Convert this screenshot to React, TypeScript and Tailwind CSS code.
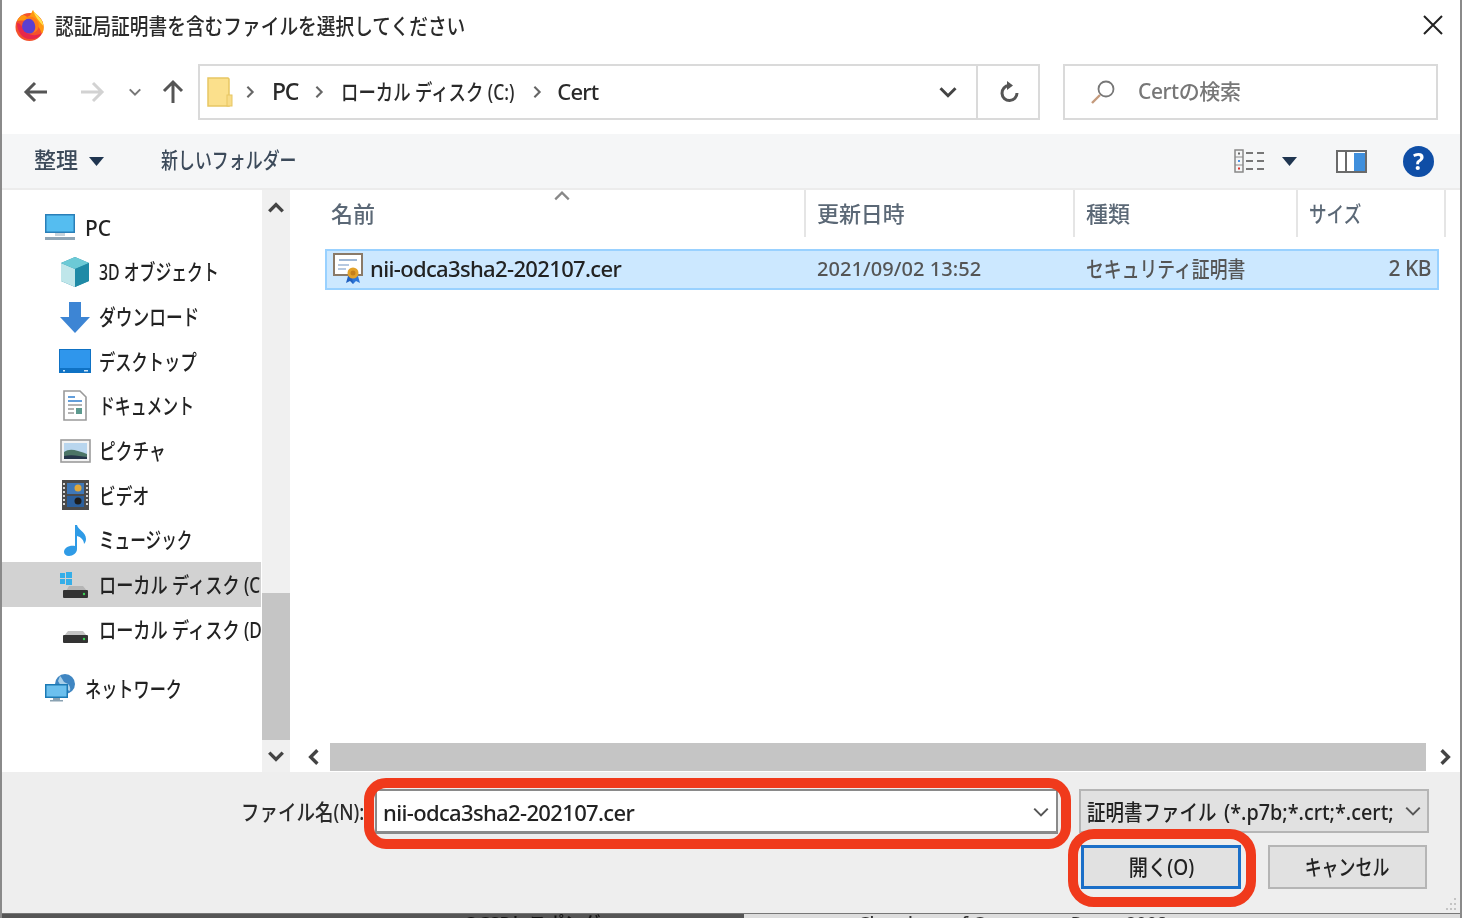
import type { ReactNode } from "react";

// Windows common file dialog with the two red annotation rings drawn on top.
// Meiryo UI is narrower than Noto Sans CJK, so the Japanese labels get a horizontal squeeze.

function Sq({ box = "", scale, children }: { box?: string; scale: string; children: ReactNode }) {
  return (
    <span className={`block shrink-0 whitespace-nowrap ${box}`}>
      <span className={`inline-block origin-left ${scale}`}>{children}</span>
    </span>
  );
}

function Firefox() {
  return (
    <svg width="32" height="32" viewBox="0 0 32 32">
      <circle cx="15.5" cy="18" r="14" fill="#f4512c" />
      <path d="M3 12C6 6 10 5 13 8c4-1 4-4 6-7 1 3 4 4 6 7 5 5 6 12 3 17-3-10-10-15-25-13z" fill="#ff980e" />
      <path d="M19 1c1 3 4 4 6 7 3 3 4 6 4.500 9C25 12 21 8 19 1z" fill="#ffe14d" />
      <path d="M3 14c0 9 6 17 14 16 5 0 9-2 11-6-5 3-12 3-16-1S7 14 3 14z" fill="#e8274b" />
      <circle cx="15.500" cy="17" r="7.500" fill="#5b3fd0" />
      <path d="M10 10c4-2 10 0 11 6 1 4-1 7-3 8 6-1 8-7 6-11-2-5-9-7-14-3z" fill="#ff7a18" />
    </svg>
  );
}

function PcIcon() {
  return (
    <svg width="32" height="30" viewBox="0 0 32 30">
      <rect x="1" y="2" width="30" height="19" fill="#2a7fb8" />
      <rect x="2.500" y="3.500" width="27" height="16" fill="#55bdf0" />
      <rect x="11" y="21" width="10" height="3" fill="#c8d4dc" />
      <rect x="1" y="25" width="30" height="3" fill="#8fa5b5" />
    </svg>
  );
}

function Cube() {
  return (
    <svg width="32" height="32" viewBox="0 0 32 32">
      <path d="M16 1l14 6v18l-14 6-14-6V7z" fill="#2f93ab" />
      <path d="M2 7l14 6v18L2 25z" fill="#bfe6ea" />
      <path d="M16 1l14 6-14 6L2 7z" fill="#6ccad6" />
      <path d="M16 13l14-6v18l-14 6z" fill="#1f8aa6" />
    </svg>
  );
}

function DownloadIcon() {
  return (
    <svg width="32" height="32" viewBox="0 0 32 32">
      <path d="M10 1h12v15h9L16 32 1 16h9z" fill="#3d85d4" />
    </svg>
  );
}

function DesktopIcon() {
  return (
    <svg width="32" height="24" viewBox="0 0 32 24">
      <rect width="32" height="24" fill="#0f72c4" />
      <rect x="1" y="1" width="30" height="18" fill="#2f96ec" />
      <rect x="4" y="21" width="2" height="1.500" fill="#cfe6f8" />
      <rect x="25" y="21" width="4" height="1.500" fill="#cfe6f8" />
    </svg>
  );
}

function DocIcon() {
  return (
    <svg width="24" height="31" viewBox="0 0 24 31">
      <path d="M1 1h16l6 6v23H1z" fill="#fff" stroke="#9a9a9a" strokeWidth="1.600" />
      <path d="M5 7h7M5 11h14" stroke="#2f7fd0" strokeWidth="1.500" />
      <path d="M5 15h14M5 19h6M5 23h6" stroke="#9a9a9a" strokeWidth="1.300" />
      <rect x="13" y="18" width="6" height="6" fill="#5c9a8e" />
    </svg>
  );
}

function PictureIcon() {
  return (
    <svg width="31" height="24" viewBox="0 0 31 24">
      <rect x="1" y="1" width="29" height="22" fill="#f3f3f3" stroke="#9c9c9c" strokeWidth="1.600" />
      <rect x="4" y="4" width="23" height="16" fill="#b9d6ee" />
      <path d="M4 13c6-4 12-2 23 2v5H4z" fill="#4c7566" />
      <path d="M4 17c8-2 15 0 23 1v2H4z" fill="#26364a" />
    </svg>
  );
}

function VideoIcon() {
  return (
    <svg width="27" height="30" viewBox="0 0 27 30">
      <rect width="27" height="30" fill="#4a4a4a" />
      <rect x="5" y="3" width="17" height="11" fill="#3f78b8" />
      <rect x="5" y="16" width="17" height="11" fill="#2b5f9c" />
      <circle cx="16" cy="8" r="3.500" fill="#e0a83a" />
      <circle cx="16" cy="21" r="3.500" fill="#1d1d1d" />
      <path d="M2 3v24M25 3v24" stroke="#e5e5e5" strokeWidth="1.800" strokeDasharray="2 2" />
    </svg>
  );
}

function MusicIcon() {
  return (
    <svg width="23" height="32" viewBox="0 0 23 32">
      <path d="M11 1h2c1 5 9 7 9 14 0 2-1 4-2 5 0-4-3-7-7-8v13c0 4-4 7-8 7-3 0-5-2-5-4 0-4 5-7 11-6z" fill="#2f9be6" />
    </svg>
  );
}

function DriveIcon({ windows }: { windows?: boolean }) {
  return (
    <svg width="30" height="30" viewBox="0 0 30 30">
      {windows ? (
        <>
          <rect x="0" y="3" width="5" height="5" fill="#35aee8" />
          <rect x="6" y="2" width="6" height="6" fill="#35aee8" />
          <rect x="0" y="9" width="5" height="5" fill="#35aee8" />
          <rect x="6" y="9" width="6" height="6" fill="#35aee8" />
          <path d="M6 21l3-5h14l4 5z" fill="#b5b5b5" />
        </>
      ) : (
        <path d="M4 21l4-5h15l4 5z" fill="#c4c4c4" />
      )}
      <rect x="3" y="20" width="25" height="8" rx="1" fill="#333" />
      <circle cx="24" cy="24" r="1.200" fill="#39d353" />
    </svg>
  );
}

function NetworkIcon() {
  return (
    <svg width="32" height="30" viewBox="0 0 32 30">
      <circle cx="21" cy="11" r="10" fill="#3f86c2" />
      <path d="M16 3c3 3 3 6 6 7s5 4 4 8l-8-3-4-7z" fill="#a7cfe9" />
      <rect x="1" y="11" width="23" height="14" fill="#1c7ab5" />
      <rect x="2.500" y="12.500" width="20" height="11" fill="#6cc0ee" />
      <rect x="9" y="25" width="7" height="2" fill="#8aa2b2" />
      <rect x="6" y="27" width="13" height="1.500" fill="#8aa2b2" />
    </svg>
  );
}

function CertIcon() {
  return (
    <svg width="31" height="34" viewBox="0 0 31 34">
      <rect x="1" y="2" width="28" height="21" fill="#fff" stroke="#8a7a68" strokeWidth="2" />
      <path d="M6 8h18" stroke="#7fa0c8" strokeWidth="1.500" />
      <path d="M5 13h11M5 17h8" stroke="#9db6d6" strokeWidth="1.500" />
      <path d="M15 24l-2 7 4-2 3 3 1-7z" fill="#1f5fc0" />
      <path d="M25 24l2 7-4-2-3 3-1-7z" fill="#2c76d8" />
      <circle cx="20" cy="21" r="5.500" fill="#e2a12a" />
      <circle cx="20" cy="21" r="2.500" fill="#c47f1a" />
    </svg>
  );
}

function Chevron({ dir, color = "#3f3f3f", size = 16, width = 2.4 }: { dir: "up" | "down" | "left" | "right"; color?: string; size?: number; width?: number }) {
  const d = {
    up: "M2 11l6-6 6 6",
    down: "M2 5l6 6 6-6",
    left: "M11 2L5 8l6 6",
    right: "M5 2l6 6-6 6",
  }[dir];
  return (
    <svg width={size} height={size} viewBox="0 0 16 16" fill="none">
      <path d={d} stroke={color} strokeWidth={width} />
    </svg>
  );
}

function Caret() {
  return (
    <svg width="15" height="9" viewBox="0 0 15 9">
      <path d="M0 0h15L7.500 9z" fill="#1f3550" />
    </svg>
  );
}

function Arrow({ dir, color }: { dir: "left" | "right" | "up"; color: string }) {
  const rot = dir === "left" ? "rotate-0" : dir === "right" ? "rotate-180" : "rotate-90";
  return (
    <svg width="26" height="26" viewBox="0 0 26 26" fill="none" className={rot}>
      <path d="M24 13H3M12 4l-9 9 9 9" stroke={color} strokeWidth="3" />
    </svg>
  );
}

const navItems: { icon: ReactNode; label: string; scale: string; h: string; active?: boolean }[] = [
  { icon: <Cube />, label: "3D オブジェクト", scale: "scale-x-[0.72]", h: "h-[45px]" },
  { icon: <DownloadIcon />, label: "ダウンロード", scale: "scale-x-[0.76]", h: "h-[45px]" },
  { icon: <DesktopIcon />, label: "デスクトップ", scale: "scale-x-[0.74]", h: "h-[44px]" },
  { icon: <DocIcon />, label: "ドキュメント", scale: "scale-x-[0.72]", h: "h-[45px]" },
  { icon: <PictureIcon />, label: "ピクチャ", scale: "scale-x-[0.76]", h: "h-[45px]" },
  { icon: <VideoIcon />, label: "ビデオ", scale: "scale-x-[0.76]", h: "h-[44px]" },
  { icon: <MusicIcon />, label: "ミュージック", scale: "scale-x-[0.71]", h: "h-[45px]" },
  { icon: <DriveIcon windows />, label: "ローカル ディスク (C:)", scale: "scale-x-[0.78]", h: "h-[45px]", active: true },
  { icon: <DriveIcon />, label: "ローカル ディスク (D:)", scale: "scale-x-[0.78]", h: "h-[45px]" },
];

function NavRow({ icon, label, scale, h, active, top }: { icon: ReactNode; label: string; scale: string; h: string; active?: boolean; top?: boolean }) {
  return (
    <div className={`flex shrink-0 items-center overflow-hidden text-[22px] text-[#222] ${h} ${top ? "pl-[42px]" : "pl-[57px]"} ${active ? "bg-[#d2d2d2]" : ""}`}>
      <span className="flex w-[32px] shrink-0 justify-center">{icon}</span>
      <Sq box={top ? "ml-[9px]" : "ml-[8px]"} scale={scale}>{label}</Sq>
    </div>
  );
}

export default function App() {
  return (
    <div className="relative flex h-[918px] w-[1462px] flex-col overflow-hidden border-x-2 border-x-[#8a8a8a] bg-white font-['Noto_Sans','Noto_Sans_CJK_JP',sans-serif] font-medium blur-[0.5px]">
      {/* title */}
      <div className="flex h-[50px] shrink-0 items-center pl-[12px] pr-[15px]">
        <Firefox />
        <Sq box="ml-[9px] text-[22px] text-[#2a2a2a]" scale="scale-x-[0.85]">認証局証明書を含むファイルを選択してください</Sq>
        <svg width="24" height="24" viewBox="0 0 24 24" className="ml-auto" fill="none">
          <path d="M3 3l18 18M21 3L3 21" stroke="#222" strokeWidth="2" />
        </svg>
      </div>

      {/* navigation */}
      <div className="flex h-[84px] shrink-0 items-center pl-[21px] pr-[22px]">
        <Arrow dir="left" color="#555" />
        <span className="ml-[30px]"><Arrow dir="right" color="#d2d2d2" /></span>
        <span className="ml-[23px]"><Chevron dir="down" color="#777" size={14} /></span>
        <span className="ml-[18px]"><Arrow dir="up" color="#555" /></span>
        <div className="ml-[12px] flex h-[56px] w-[842px] items-center border-2 border-[#dadada] text-[22px] text-[#2a2a2a]">
          <svg width="26" height="30" viewBox="0 0 26 30" className="ml-[7px] shrink-0">
            <path d="M1 1h20l1 1v27H1z" fill="#fbe08c" stroke="#e7c663" strokeWidth="1.500" />
            <rect x="20" y="18" width="5" height="11" fill="#f8dc88" stroke="#e7c663" />
          </svg>
          <span className="ml-[10px]"><Chevron dir="right" color="#666" size={14} /></span>
          <span className="ml-[15px] pb-[2px] text-[23px] tracking-[-1.2px]">PC</span>
          <span className="ml-[14px]"><Chevron dir="right" color="#666" size={14} /></span>
          <Sq box="ml-[15px] w-[174px] pb-[2px]" scale="scale-x-[0.79]">ローカル ディスク (C:)</Sq>
          <span className="ml-[15px]"><Chevron dir="right" color="#666" size={14} /></span>
          <span className="ml-[13px] pb-[2px] tracking-[-0.8px]">Cert</span>
          <span className="ml-auto mr-[18px]"><Chevron dir="down" color="#444" size={20} /></span>
          <div className="flex h-full w-[62px] items-center justify-center border-l-2 border-[#dadada] pl-[4px]">
            <svg width="24" height="24" viewBox="0 0 24 24" fill="none">
              <path d="M19 13a7.500 7.500 0 1 1-8-7.400h2" stroke="#555" strokeWidth="3" />
              <path d="M9 1l6 4.500-6 4.500z" fill="#555" />
            </svg>
          </div>
        </div>
        <div className="ml-[23px] flex h-[56px] flex-1 items-center border-2 border-[#dadada] pl-[25px]">
          <svg width="26" height="26" viewBox="0 0 26 26" fill="none">
            <circle cx="16" cy="10" r="7.500" stroke="#777" strokeWidth="1.800" />
            <path d="M10 16l-8 8" stroke="#c49a7c" strokeWidth="2.400" />
          </svg>
          <span className="ml-[22px] text-[21px] tracking-[-0.4px] text-[#777]">Certの検索</span>
        </div>
      </div>

      {/* command bar */}
      <div className="flex h-[56px] shrink-0 items-center border-b-2 border-[#ececec] bg-[#f5f6f7] pl-[32px] pr-[26px] text-[22px] text-[#3c4a5a]">
        <span className="pb-[4px]">整理</span>
        <span className="ml-[11px]"><Caret /></span>
        <Sq box="ml-[57px] w-[136px] pb-[4px]" scale="scale-x-[0.77]">新しいフォルダー</Sq>
        <svg width="31" height="24" viewBox="0 0 31 24" className="ml-auto" fill="none">
          <rect x="1" y="1" width="8" height="22" stroke="#888" strokeWidth="1.500" />
          <path d="M1 8h8M1 16h8" stroke="#888" />
          <rect x="4" y="3.500" width="2" height="2" fill="#666" />
          <rect x="4" y="11" width="2" height="2" fill="#4a90e2" />
          <rect x="4" y="18.500" width="2" height="2" fill="#d9302c" />
          <path d="M12 4h7M23 4h7M12 12h7M23 12h7M12 20h7M23 20h7" stroke="#777" strokeWidth="1.800" />
        </svg>
        <span className="ml-[17px]"><Caret /></span>
        <svg width="31" height="23" viewBox="0 0 31 23" className="ml-[39px]" fill="none">
          <rect x="1" y="1" width="29" height="21" fill="#fff" stroke="#6a6a6a" strokeWidth="2" />
          <rect x="9" y="1" width="2" height="21" fill="#6a6a6a" />
          <rect x="18" y="3" width="11" height="18" fill="#3f8fdc" />
        </svg>
        <span className="ml-[36px] flex h-[31px] w-[31px] items-center justify-center rounded-full bg-[#0f4ea6] text-[23px] font-bold leading-none text-white">?</span>
      </div>

      {/* body */}
      <div className="flex min-h-0 flex-1">
        <div className="flex w-[259px] shrink-0 flex-col pt-[15px]">
          <NavRow icon={<PcIcon />} label="PC" scale="scale-x-[0.95]" h="h-[44px]" top />
          {navItems.map((item) => (
            <NavRow key={item.label} {...item} />
          ))}
          <div className="mt-[14px]">
            <NavRow icon={<NetworkIcon />} label="ネットワーク" scale="scale-x-[0.735]" h="h-[44px]" top />
          </div>
        </div>
        <div className="ml-px flex w-[28px] shrink-0 flex-col bg-[#f0f0f0]">
          <div className="flex h-[36px] items-center justify-center"><Chevron dir="up" size={18} color="#444" width={3} /></div>
          <div className="flex-1" />
          <div className="h-[147px] bg-[#c5c5c5]" />
          <div className="flex h-[32px] items-center justify-center"><Chevron dir="down" size={18} color="#444" width={3} /></div>
        </div>
        <div className="flex min-w-0 flex-1 flex-col pl-[8px]">
          <div className="relative flex h-[47px] shrink-0 items-center text-[22px] text-[#5b6876]">
            <span className="w-[506px] shrink-0 pl-[33px]">名前</span>
            <span className="flex h-full w-[269px] shrink-0 items-center border-l-2 border-[#e5e5e5] pl-[11px] tracking-[-0.1px]">更新日時</span>
            <span className="flex h-full w-[223px] shrink-0 items-center border-l-2 border-[#e5e5e5] pl-[11px]">種類</span>
            <span className="flex h-full w-[150px] shrink-0 items-center border-x-2 border-[#e5e5e5] pl-[11px]">
              <Sq scale="scale-x-[0.8]">サイズ</Sq>
            </span>
            <span className="absolute left-[255px] top-[-3px]"><Chevron dir="up" size={18} color="#888" width={2} /></span>
          </div>
          <div className="ml-[27px] mr-[21px] mt-[12px] flex h-[41px] shrink-0 items-center border-2 border-[#99d1ff] bg-[#cce8ff] px-[6px] pb-[2px] text-[#555]">
            <CertIcon />
            <span className="ml-[6px] w-[447px] shrink-0 text-[22px] tracking-[-0.65px] text-[#222]">nii-odca3sha2-202107.cer</span>
            <span className="w-[269px] shrink-0 text-[20px] tracking-[0.05px]">2021/09/02 13:52</span>
            <Sq box="text-[22px]" scale="scale-x-[0.81]">セキュリティ証明書</Sq>
            <span className="ml-auto text-[21px] tracking-[-0.5px]">2 KB</span>
          </div>
          <div className="flex-1" />
          <div className="mb-[1px] flex h-[28px] shrink-0 items-center">
            <span className="flex w-[32px] justify-center"><Chevron dir="left" size={18} color="#444" width={3} /></span>
            <div className="h-full w-[1096px] bg-[#c5c5c5]" />
            <span className="flex flex-1 justify-center pl-[3px]"><Chevron dir="right" size={18} color="#444" width={3} /></span>
          </div>
        </div>
      </div>

      {/* footer */}
      <div className="relative h-[141px] shrink-0 bg-[#eeeeee]">
        <div className="flex pl-[239px] pr-[31px] pt-[17px]">
          <Sq box="flex h-[44px] w-[134px] items-center text-[22px] text-[#2a2a2a]" scale="scale-x-[0.84]">ファイル名(N):</Sq>
          <div className="flex h-[45px] w-[683px] shrink-0 items-center border-2 border-b-[3px] border-[#8a8a8a] bg-white px-[6px] pt-[2px]">
            <span className="text-[22px] tracking-[-0.65px] text-[#222]">nii-odca3sha2-202107.cer</span>
            <span className="ml-auto"><Chevron dir="down" color="#555" size={18} width={1.800} /></span>
          </div>
          <div className="ml-[21px] flex h-[44px] min-w-0 flex-1 items-center border-2 border-[#b5b5b5] bg-[#e1e1e1] pl-[6px] pr-[5px] text-[22px] text-[#222]">
            <Sq box="w-[137px]" scale="scale-x-[0.84]">証明書ファイル</Sq>
            <Sq box="w-[166px]" scale="scale-x-[0.9]">(*.p7b;*.crt;*.cert;</Sq>
            <span className="ml-auto"><Chevron dir="down" color="#555" size={18} width={1.800} /></span>
          </div>
        </div>
        <div className="flex pl-[1079px] pt-[11px] text-[22px] text-[#222]">
          <div className="flex h-[44px] w-[160px] items-center justify-center border-[3px] border-[#1b6fc8] bg-[#e1e1e1] pb-[2px]">
            <span className="inline-block scale-x-[0.87] whitespace-nowrap">開く(O)</span>
          </div>
          <div className="ml-[27px] flex h-[44px] w-[159px] items-center justify-center border-2 border-[#b5b5b5] bg-[#e1e1e1] pb-[2px]">
            <span className="inline-block scale-x-[0.77] whitespace-nowrap">キャンセル</span>
          </div>
        </div>
        <svg width="16" height="16" viewBox="0 0 16 16" className="absolute bottom-[1px] right-[2px]">
          <path d="M12 2h2v2h-2zM8 7h2v2H8zM12 7h2v2h-2zM4 12h2v2H4zM8 12h2v2H8zM12 12h2v2h-2z" fill="#c4c4c4" />
        </svg>
        {/* annotation rings */}
        <div className="absolute left-[362px] top-[6px] h-[71px] w-[707px] rounded-[22px] border-[10px] border-[#f03a1c]" />
        <div className="absolute left-[1066px] top-[57px] h-[78px] w-[188px] rounded-[26px] border-[10px] border-[#f03a1c]" />
      </div>

      {/* edge of the page behind the dialog */}
      <div className="flex h-[5px] shrink-0 overflow-hidden border-t border-[#777] bg-[#ddd] text-[18px] leading-[18px] text-[#333]">
        <div className="h-full w-[742px] shrink-0 bg-[#555] pl-[462px] text-[#111]">OCSPレスポンダ</div>
        <span className="ml-[114px] whitespace-nowrap">Chambers of Commerce Root - 2008</span>
      </div>
    </div>
  );
}
